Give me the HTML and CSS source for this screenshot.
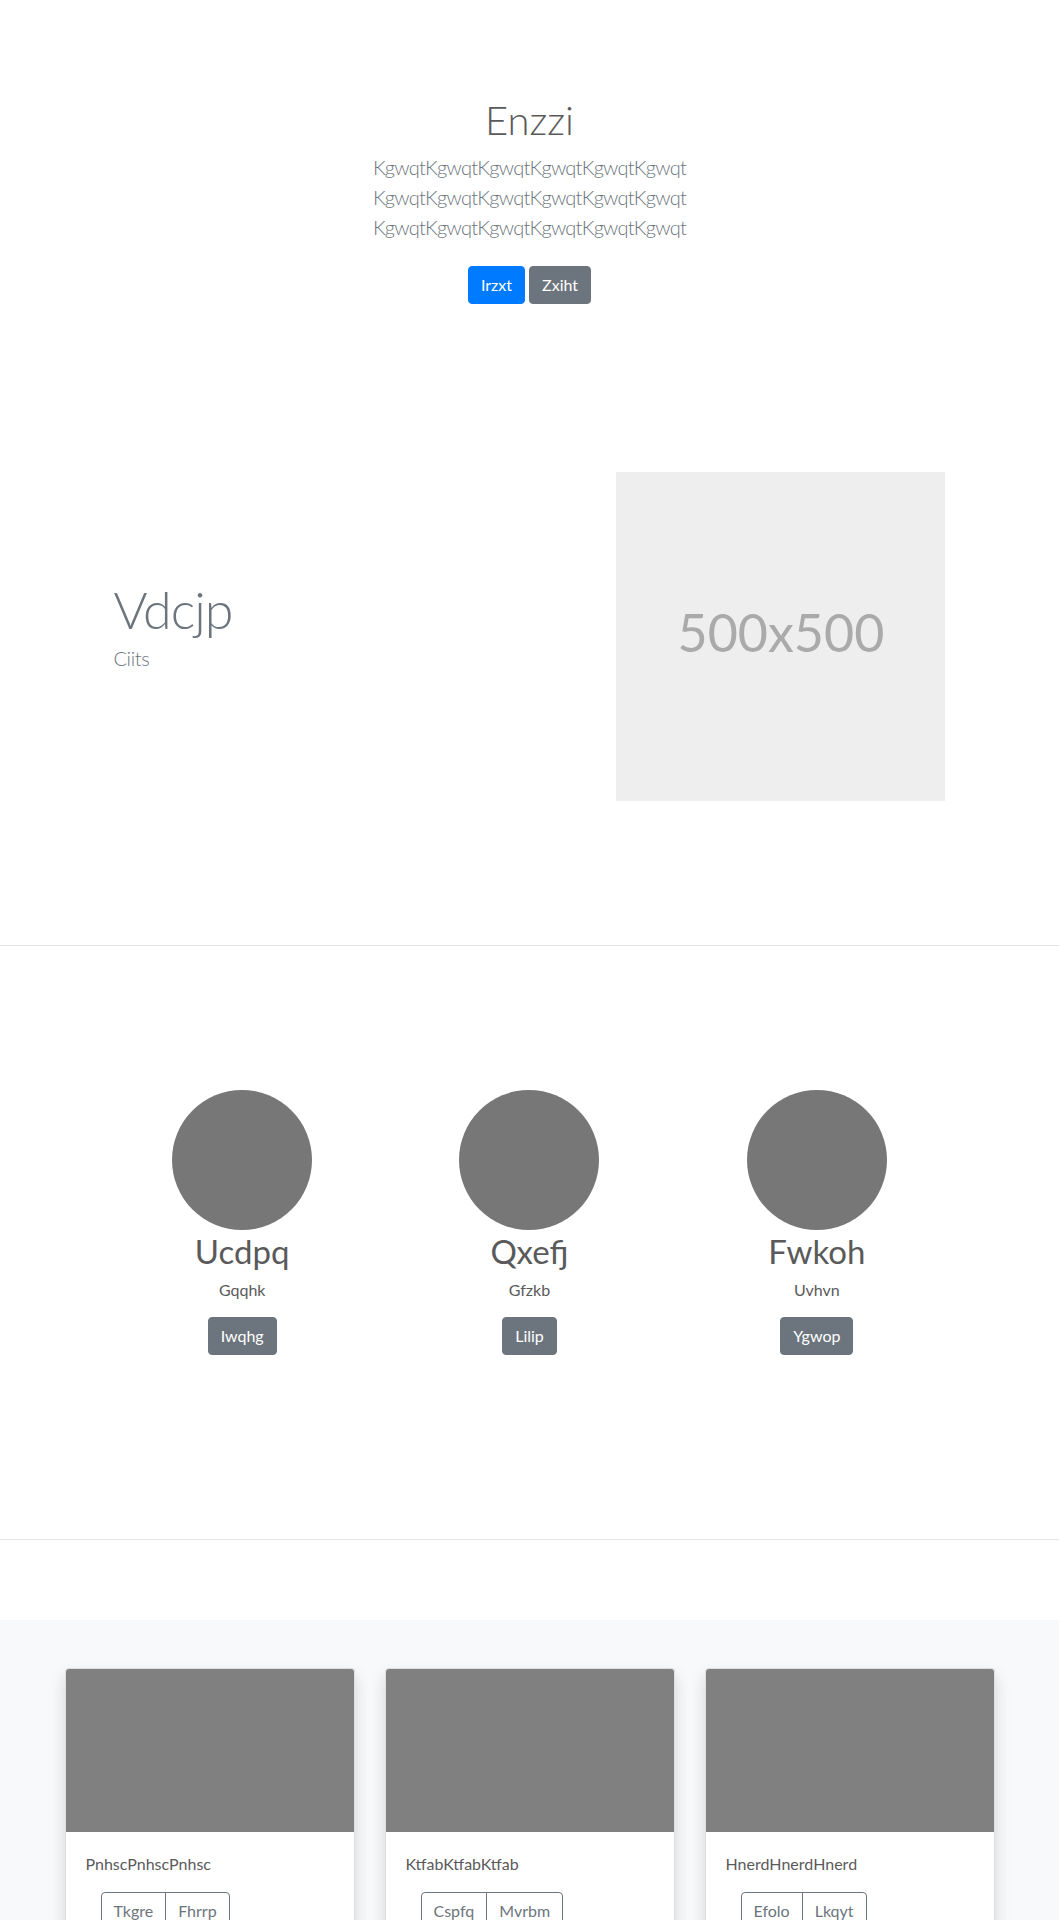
FILE: index.html
```html
<!DOCTYPE html>
<html lang="en">
<head>
<meta charset="utf-8">
<title>Enzzi</title>
<link rel="stylesheet" href="styles.css">
</head>
<body>
<header class="hero">
  <h1 class="hero-title">Enzzi</h1>
  <p class="lead muted hero-lead">KgwqtKgwqtKgwqtKgwqtKgwqtKgwqt<br>KgwqtKgwqtKgwqtKgwqtKgwqtKgwqt<br>KgwqtKgwqtKgwqtKgwqtKgwqtKgwqt</p>
  <p class="hero-actions"><a class="btn btn-primary" href="#">Irzxt</a> <a class="btn btn-secondary" href="#">Zxiht</a></p>
</header>

<section class="featurette wrap">
  <div class="feat-text">
    <h2 class="feat-heading">Vdcjp</h2>
    <p class="lead muted feat-lead">Ciits</p>
  </div>
  <div class="feat-media">
    <div class="placeholder">500x500</div>
  </div>
</section>

<hr class="divider divider-1">

<section class="marketing wrap">
  <div class="person">
    <div class="avatar"></div>
    <h2 class="person-name">Ucdpq</h2>
    <p class="person-role">Gqqhk</p>
    <p class="person-action"><a class="btn btn-secondary" href="#">Iwqhg</a></p>
  </div>
  <div class="person">
    <div class="avatar"></div>
    <h2 class="person-name">Qxefj</h2>
    <p class="person-role">Gfzkb</p>
    <p class="person-action"><a class="btn btn-secondary" href="#">Lilip</a></p>
  </div>
  <div class="person">
    <div class="avatar"></div>
    <h2 class="person-name">Fwkoh</h2>
    <p class="person-role">Uvhvn</p>
    <p class="person-action"><a class="btn btn-secondary" href="#">Ygwop</a></p>
  </div>
</section>

<hr class="divider divider-2">

<section class="album">
  <div class="cards">
    <div class="card">
      <div class="card-img"></div>
      <div class="card-body">
        <p class="card-text">PnhscPnhscPnhsc</p>
        <div class="card-actions">
          <div class="btn-group">
            <a class="btn btn-outline" href="#">Tkgre</a><a class="btn btn-outline" href="#">Fhrrp</a>
          </div>
        </div>
      </div>
    </div>
    <div class="card">
      <div class="card-img"></div>
      <div class="card-body">
        <p class="card-text">KtfabKtfabKtfab</p>
        <div class="card-actions">
          <div class="btn-group">
            <a class="btn btn-outline" href="#">Cspfq</a><a class="btn btn-outline" href="#">Mvrbm</a>
          </div>
        </div>
      </div>
    </div>
    <div class="card">
      <div class="card-img"></div>
      <div class="card-body">
        <p class="card-text">HnerdHnerdHnerd</p>
        <div class="card-actions">
          <div class="btn-group">
            <a class="btn btn-outline" href="#">Efolo</a><a class="btn btn-outline" href="#">Lkqyt</a>
          </div>
        </div>
      </div>
    </div>
  </div>
</section>
</body>
</html>
```
FILE: styles.css
```css
* { box-sizing: border-box; }

html, body {
  margin: 0;
  padding: 0;
  background: #fff;
}

body {
  font-family: "Lato", "Open Sans", sans-serif;
  font-size: 16px;
  line-height: 1.5;
  color: #5a5a5a;
}

h1, h2, p { margin: 0; }

.muted { color: #6c757d; }

.lead {
  font-size: 20px;
  font-weight: 300;
  line-height: 30px;
}

/* buttons */
.btn {
  display: inline-block;
  font-size: 16px;
  line-height: 24px;
  padding: 6px 12px;
  border: 1px solid transparent;
  border-radius: 4px;
  text-decoration: none;
  font-weight: 400;
  vertical-align: middle;
}
.btn-primary { background: #007bff; border-color: #007bff; color: #fff; }
.btn-secondary { background: #6c757d; border-color: #6c757d; color: #fff; }
.btn-outline { background: transparent; border-color: #6c757d; color: #6c757d; }

/* hero */
.hero {
  text-align: center;
  padding: 96px 0 0;
  display: flow-root;
}
.hero-title {
  font-size: 40px;
  font-weight: 300;
  line-height: 48px;
  margin-bottom: 8px;
}
.hero-lead {
  margin-bottom: 16px;
  letter-spacing: -0.75px;
}
.hero-actions { padding: 8px 0; }

/* width wrapper for featurette + marketing */
.wrap {
  width: 862px;
  margin-left: auto;
  margin-right: auto;
}

/* featurette */
.featurette {
  display: flex;
  align-items: center;
  margin-top: 160px;
}
.feat-text {
  flex: 0 0 58.3333%;
  padding: 0 15px;
}
.feat-heading {
  font-size: 52px;
  font-weight: 300;
  line-height: 67px;
  letter-spacing: -1px;
  color: #6c757d;
}
.feat-lead {
  margin-bottom: 25px;
  letter-spacing: -0.4px;
}
.feat-media {
  flex: 0 0 41.6667%;
  padding: 0 15px;
}
.placeholder {
  width: 100%;
  aspect-ratio: 1 / 1;
  background: #eee;
  color: #aaa;
  font-size: 52px;
  display: flex;
  align-items: center;
  justify-content: center;
  padding-bottom: 9px;
}

/* dividers */
.divider {
  border: 0;
  border-top: 1px solid rgba(0, 0, 0, 0.1);
  margin: 0;
  height: 0;
}
.divider-1 { margin-top: 144px; }
.divider-2 { margin-top: 184px; }

/* marketing */
.marketing {
  display: grid;
  grid-template-columns: repeat(3, 1fr);
  padding-top: 144px;
}
.person {
  text-align: center;
  padding: 0 15px;
}
.avatar {
  width: 140px;
  height: 140px;
  border-radius: 50%;
  background: #777;
  margin: 0 auto;
}
.person-name {
  font-size: 33px;
  font-weight: 400;
  line-height: 42px;
  margin-bottom: 6px;
}
.person-role { margin-bottom: 15px; }

/* album */
.album {
  margin-top: 80px;
  background: #f8f9fa;
  padding: 48px 0 48px;
}
.cards {
  width: 930px;
  margin: 0 auto;
  display: grid;
  grid-template-columns: repeat(3, 1fr);
  gap: 30px;
}
.card {
  background: #fff;
  border: 1px solid rgba(0, 0, 0, 0.125);
  border-radius: 4px;
  overflow: hidden;
  box-shadow: 0 8px 16px rgba(0, 0, 0, 0.15);
}
.card-img {
  height: 163px;
  background: #808080;
}
.card-body { padding: 20px; }
.card-text { margin-bottom: 16px; }
.card-actions { padding-left: 15px; }
.btn-group { display: inline-flex; }
.btn-group .btn { border-radius: 0; }
.btn-group .btn:first-child { border-radius: 4px 0 0 4px; }
.btn-group .btn:last-child { border-radius: 0 4px 4px 0; margin-left: -1px; }
```
